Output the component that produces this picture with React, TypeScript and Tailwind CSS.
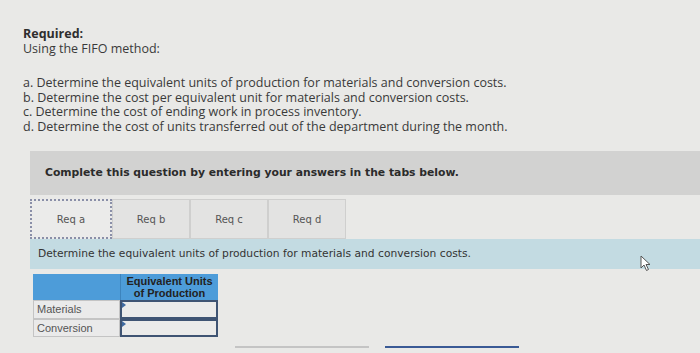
const parts = [
  "a. Determine the equivalent units of production for materials and conversion costs.",
  "b. Determine the cost per equivalent unit for materials and conversion costs.",
  "c. Determine the cost of ending work in process inventory.",
  "d. Determine the cost of units transferred out of the department during the month.",
];

const tabs = ["Req a", "Req b", "Req c", "Req d"];

export default function App() {
  return (
    <div className="w-[700px] h-[353px] overflow-hidden bg-[#e9e9e7] text-[#3a3a3a] relative">
      <div className="pl-[23px] pt-[26px] font-['Open_Sans',sans-serif] text-[12.5px] leading-[15px]">
        <p className="font-bold text-[#2e2e2e]">Required:</p>
        <p>Using the FIFO method:</p>
        <div className="mt-[20px] leading-[14.5px]">
          {parts.map((p) => (
            <p key={p}>{p}</p>
          ))}
        </div>
      </div>

      <div className="ml-[30px] mt-[17px]">
        <div className="h-[44px] bg-[#d2d2d1] flex items-center pl-[15px] font-['DejaVu_Sans',sans-serif] font-bold text-[10.8px] text-[#2b2b2b]">
          Complete this question by entering your answers in the tabs below.
        </div>

        <div className="mt-[4px] flex h-[40px] font-['DejaVu_Sans',sans-serif] text-[10px] text-[#555]">
          {tabs.map((t, i) => (
            <div
              key={t}
              className={
                i === 0
                  ? "w-[82px] flex items-center justify-center bg-[#ebebea] border-2 border-dotted border-[#8a8fa8]"
                  : "w-[78px] flex items-center justify-center bg-[#e3e3e2] border border-[#cfcfce]"
              }
            >
              {t}
            </div>
          ))}
        </div>

        <div className="h-[30px] bg-[#c3dbe2] flex items-center pl-[8px] font-['DejaVu_Sans',sans-serif] text-[10.7px] text-[#333]">
          Determine the equivalent units of production for materials and conversion costs.
        </div>

        <div className="ml-[3px] mt-[5px] w-[185px] font-['Liberation_Sans',sans-serif] text-[11px]">
          <div className="flex h-[26px] bg-[#4d9cd9]">
            <div className="w-[87px]" />
            <div className="flex-1 text-center font-bold leading-[12px] pt-[1px] text-[#222] border-l border-[#3d84bd]">
              Equivalent Units
              <br />
              of Production
            </div>
          </div>
          {["Materials", "Conversion"].map((r) => (
            <div key={r} className="flex h-[18.5px]">
              <div className="w-[87px] border border-[#c4c4c4] bg-[#eaeaea] pl-[3px] flex items-center text-[#555]">
                {r}
              </div>
              <div className="flex-1 border-2 border-[#3f5473] bg-[#ebebea] relative">
                <span className="absolute left-0 top-0 w-0 h-0 border-t-[3px] border-b-[3px] border-l-[4px] border-t-transparent border-b-transparent border-l-[#3f6aa0]" />
              </div>
            </div>
          ))}
        </div>
      </div>

      <div className="absolute left-[235px] top-[346px] w-[134px] h-[2px] bg-[#c4c4c4]" />
      <div className="absolute left-[385px] top-[346px] w-[134px] h-[2px] bg-[#3a5a95]" />

      <svg className="absolute left-[640px] top-[255px]" width="12" height="17" viewBox="0 0 12 17">
        <path d="M1 1 L1 13 L4 10 L6.5 15.5 L8.5 14.5 L6 9.5 L10 9.5 Z" fill="#fff" stroke="#555" strokeWidth="1" />
      </svg>
    </div>
  );
}
